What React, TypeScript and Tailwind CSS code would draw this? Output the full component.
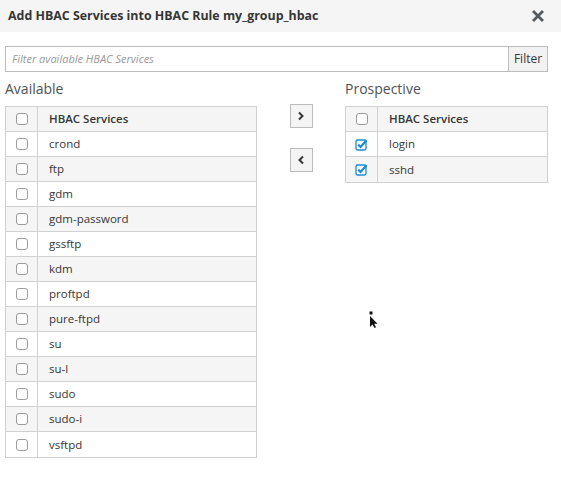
import React from 'react';

const available = [
  'crond', 'ftp', 'gdm', 'gdm-password', 'gssftp', 'kdm', 'proftpd',
  'pure-ftpd', 'su', 'su-l', 'sudo', 'sudo-i', 'vsftpd',
];

const prospective = ['login', 'sshd'];

const Box: React.FC<{ checked?: boolean }> = ({ checked }) =>
  checked ? (
    <svg width="13" height="13" viewBox="0 0 13 13" className="block">
      <rect x="1" y="2" width="10" height="10" rx="1.5" fill="white" stroke="#1a8ad0" strokeWidth="1.3" />
      <path d="M3.2 6.6 L5.6 9 L11.6 2.2" fill="none" stroke="#1a8ad0" strokeWidth="2.2" />
    </svg>
  ) : (
    <span className="block w-[12px] h-[12px] rounded-[3px] border border-[#9a9c9e] bg-white" />
  );

const Table: React.FC<{ items: string[]; checked?: boolean }> = ({ items, checked }) => (
  <div className="border border-[#d1d1d1]">
    <div className="flex h-[25px] bg-[#f5f5f5] border-b border-[#d1d1d1]">
      <div className="w-[32px] flex items-center justify-center border-r border-[#d1d1d1]">
        <Box />
      </div>
      <div className="flex items-center pl-[11px] font-semibold text-[#363636]">HBAC Services</div>
    </div>
    {items.map((s, i) => (
      <div
        key={s}
        className={`flex h-[25px] ${i % 2 === 1 ? 'bg-[#f5f5f5]' : 'bg-white'} ${i < items.length - 1 ? 'border-b border-[#d1d1d1]' : ''}`}
      >
        <div className="w-[32px] flex items-center justify-center border-r border-[#d1d1d1]">
          <Box checked={checked} />
        </div>
        <div className="flex items-center pl-[11px] text-[#363636]">{s}</div>
      </div>
    ))}
  </div>
);

const App: React.FC = () => {
  return (
    <div className="relative w-[561px] h-[501px] bg-white text-[11.5px] font-['Open_Sans',sans-serif] text-[#363636]">
      <div className="flex items-center justify-between h-[32px] bg-[#f5f5f5] pl-[8px] pr-[17px]">
        <h4 className="font-bold text-[12.4px] text-[#363636]">Add HBAC Services into HBAC Rule my_group_hbac</h4>
        <svg width="12" height="12" viewBox="0 0 12 12">
          <path d="M2 2 L10 10 M10 2 L2 10" stroke="#555a5f" strokeWidth="2.8" strokeLinecap="square" />
        </svg>
      </div>

      <div className="px-[5px] pr-[13px] pt-[14px]">
        <div className="flex h-[26px]">
          <div className="flex-1 flex items-center border border-[#bbbbbb] border-r-0 pl-[6px] italic text-[#999999] text-[11px]">
            Filter available HBAC Services
          </div>
          <button className="w-[40px] border border-[#bbbbbb] bg-[#f2f2f2] text-[12px] text-[#363636]">Filter</button>
        </div>

        <div className="grid grid-cols-[252px_88px_203px] mt-[7px]">
          <div>
            <div className="h-[27px] text-[14px] text-[#4d5258] leading-[20px]">Available</div>
            <Table items={available} />
          </div>
          <div className="flex flex-col items-center pt-[25px] gap-[20px]">
            <button className="w-[23px] h-[24px] border border-[#bbbbbb] bg-[#f4f4f4] flex items-center justify-center">
              <svg width="8" height="10" viewBox="0 0 8 10">
                <path d="M2 1.5 L5.5 5 L2 8.5" fill="none" stroke="#363636" strokeWidth="2" />
              </svg>
            </button>
            <button className="w-[23px] h-[24px] border border-[#bbbbbb] bg-[#f4f4f4] flex items-center justify-center">
              <svg width="8" height="10" viewBox="0 0 8 10">
                <path d="M6 1.5 L2.5 5 L6 8.5" fill="none" stroke="#363636" strokeWidth="2" />
              </svg>
            </button>
          </div>
          <div>
            <div className="h-[27px] text-[14px] text-[#4d5258] leading-[20px]">Prospective</div>
            <Table items={prospective} checked />
          </div>
        </div>
      </div>

      {/* mouse pointer */}
      <svg className="absolute left-[368px] top-[311px]" width="14" height="18" viewBox="0 0 14 18">
        <rect x="1.5" y="0.5" width="3" height="3" fill="#111" />
        <path d="M2 5 L2 16 L4.5 13.5 L6.5 17 L8 16.3 L6.2 12.8 L9.5 12.8 Z" fill="#111" />
      </svg>
    </div>
  );
};

export default App;
